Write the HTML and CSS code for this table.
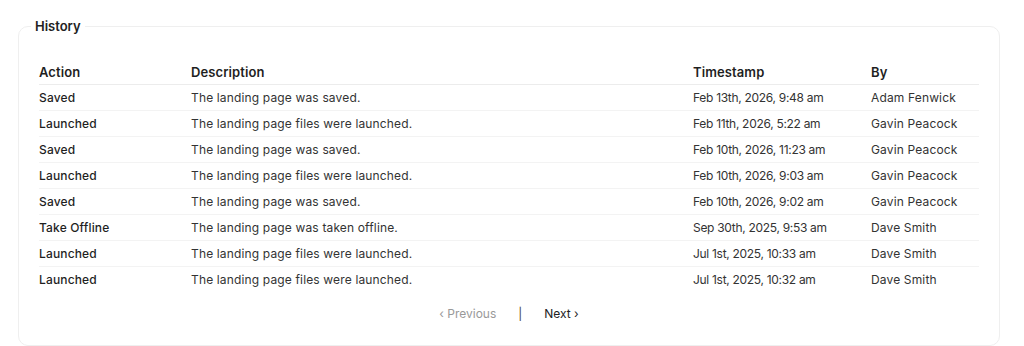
FILE: index.html
```html
<!DOCTYPE html>
<html>
<head>
<meta charset="utf-8">
<link rel="stylesheet" href="styles.css">
</head>
<body>
<div class="page">
  <fieldset class="panel">
    <legend class="panel-title">History</legend>
    <table class="history">
      <colgroup>
        <col class="c-action"><col class="c-desc"><col class="c-time"><col class="c-by">
      </colgroup>
      <thead>
        <tr><th>Action</th><th>Description</th><th>Timestamp</th><th>By</th></tr>
      </thead>
      <tbody>
        <tr><td class="act">Saved</td><td>The landing page was saved.</td><td class="ts">Feb 13th, 2026, 9:48 am</td><td>Adam Fenwick</td></tr>
        <tr><td class="act">Launched</td><td>The landing page files were launched.</td><td class="ts">Feb 11th, 2026, 5:22 am</td><td>Gavin Peacock</td></tr>
        <tr><td class="act">Saved</td><td>The landing page was saved.</td><td class="ts">Feb 10th, 2026, 11:23 am</td><td>Gavin Peacock</td></tr>
        <tr><td class="act">Launched</td><td>The landing page files were launched.</td><td class="ts">Feb 10th, 2026, 9:03 am</td><td>Gavin Peacock</td></tr>
        <tr><td class="act">Saved</td><td>The landing page was saved.</td><td class="ts">Feb 10th, 2026, 9:02 am</td><td>Gavin Peacock</td></tr>
        <tr><td class="act">Take Offline</td><td>The landing page was taken offline.</td><td class="ts">Sep 30th, 2025, 9:53 am</td><td>Dave Smith</td></tr>
        <tr><td class="act">Launched</td><td>The landing page files were launched.</td><td class="ts">Jul 1st, 2025, 10:33 am</td><td>Dave Smith</td></tr>
        <tr class="last"><td class="act">Launched</td><td>The landing page files were launched.</td><td class="ts">Jul 1st, 2025, 10:32 am</td><td>Dave Smith</td></tr>
      </tbody>
    </table>
    <div class="pager">
      <span class="prev">&lsaquo; Previous</span>
      <span class="sep">|</span>
      <span class="next">Next &rsaquo;</span>
    </div>
  </fieldset>
</div>
</body>
</html>
```

FILE: styles.css
```css
html, body { margin: 0; padding: 0; background: #fff; }
body {
  font-family: "Inter", "Open Sans", sans-serif;
  font-variant-numeric: proportional-nums;
  color: #222;
}
.page { padding: 18px 24px 0 18px; }
.panel {
  margin: 0;
  border: 1px solid #efefef;
  border-radius: 10px;
  padding: 22px 20px 24px 20px;
  min-width: 0;
}
.panel-title {
  font-size: 13px;
  font-weight: 600;
  color: #222;
  padding: 0 4px;
  margin-left: -8px;
  line-height: 16px;
}
.history {
  width: 100%;
  border-collapse: collapse;
  table-layout: fixed;
  font-size: 12px;
  letter-spacing: 0.15px;
}
.c-action { width: 152px; }
.c-desc { width: 502px; }
.c-time { width: 178px; }
.c-by { width: auto; }
.history th {
  text-align: left;
  font-weight: 600;
  font-size: 13px;
  letter-spacing: 0.1px;
  color: #1f1f1f;
  padding: 0 0 4px 0;
  height: 24px;
  line-height: 16px;
  border-bottom: 1px solid #ececec;
  vertical-align: bottom;
}
.history td {
  padding: 0;
  height: 25px;
  border-bottom: 1px solid #f3f3f3;
  color: #333;
  white-space: nowrap;
}
.history td.act { font-weight: 500; color: #1f1f1f; }
.history td.ts { letter-spacing: -0.3px; }
.history tr.last td { border-bottom: none; }
.pager {
  display: flex;
  justify-content: center;
  gap: 22px;
  font-size: 12px;
  margin-top: 14px;
}
.prev { color: #999; }
.sep { color: #444; }
.next { color: #222; }
```
